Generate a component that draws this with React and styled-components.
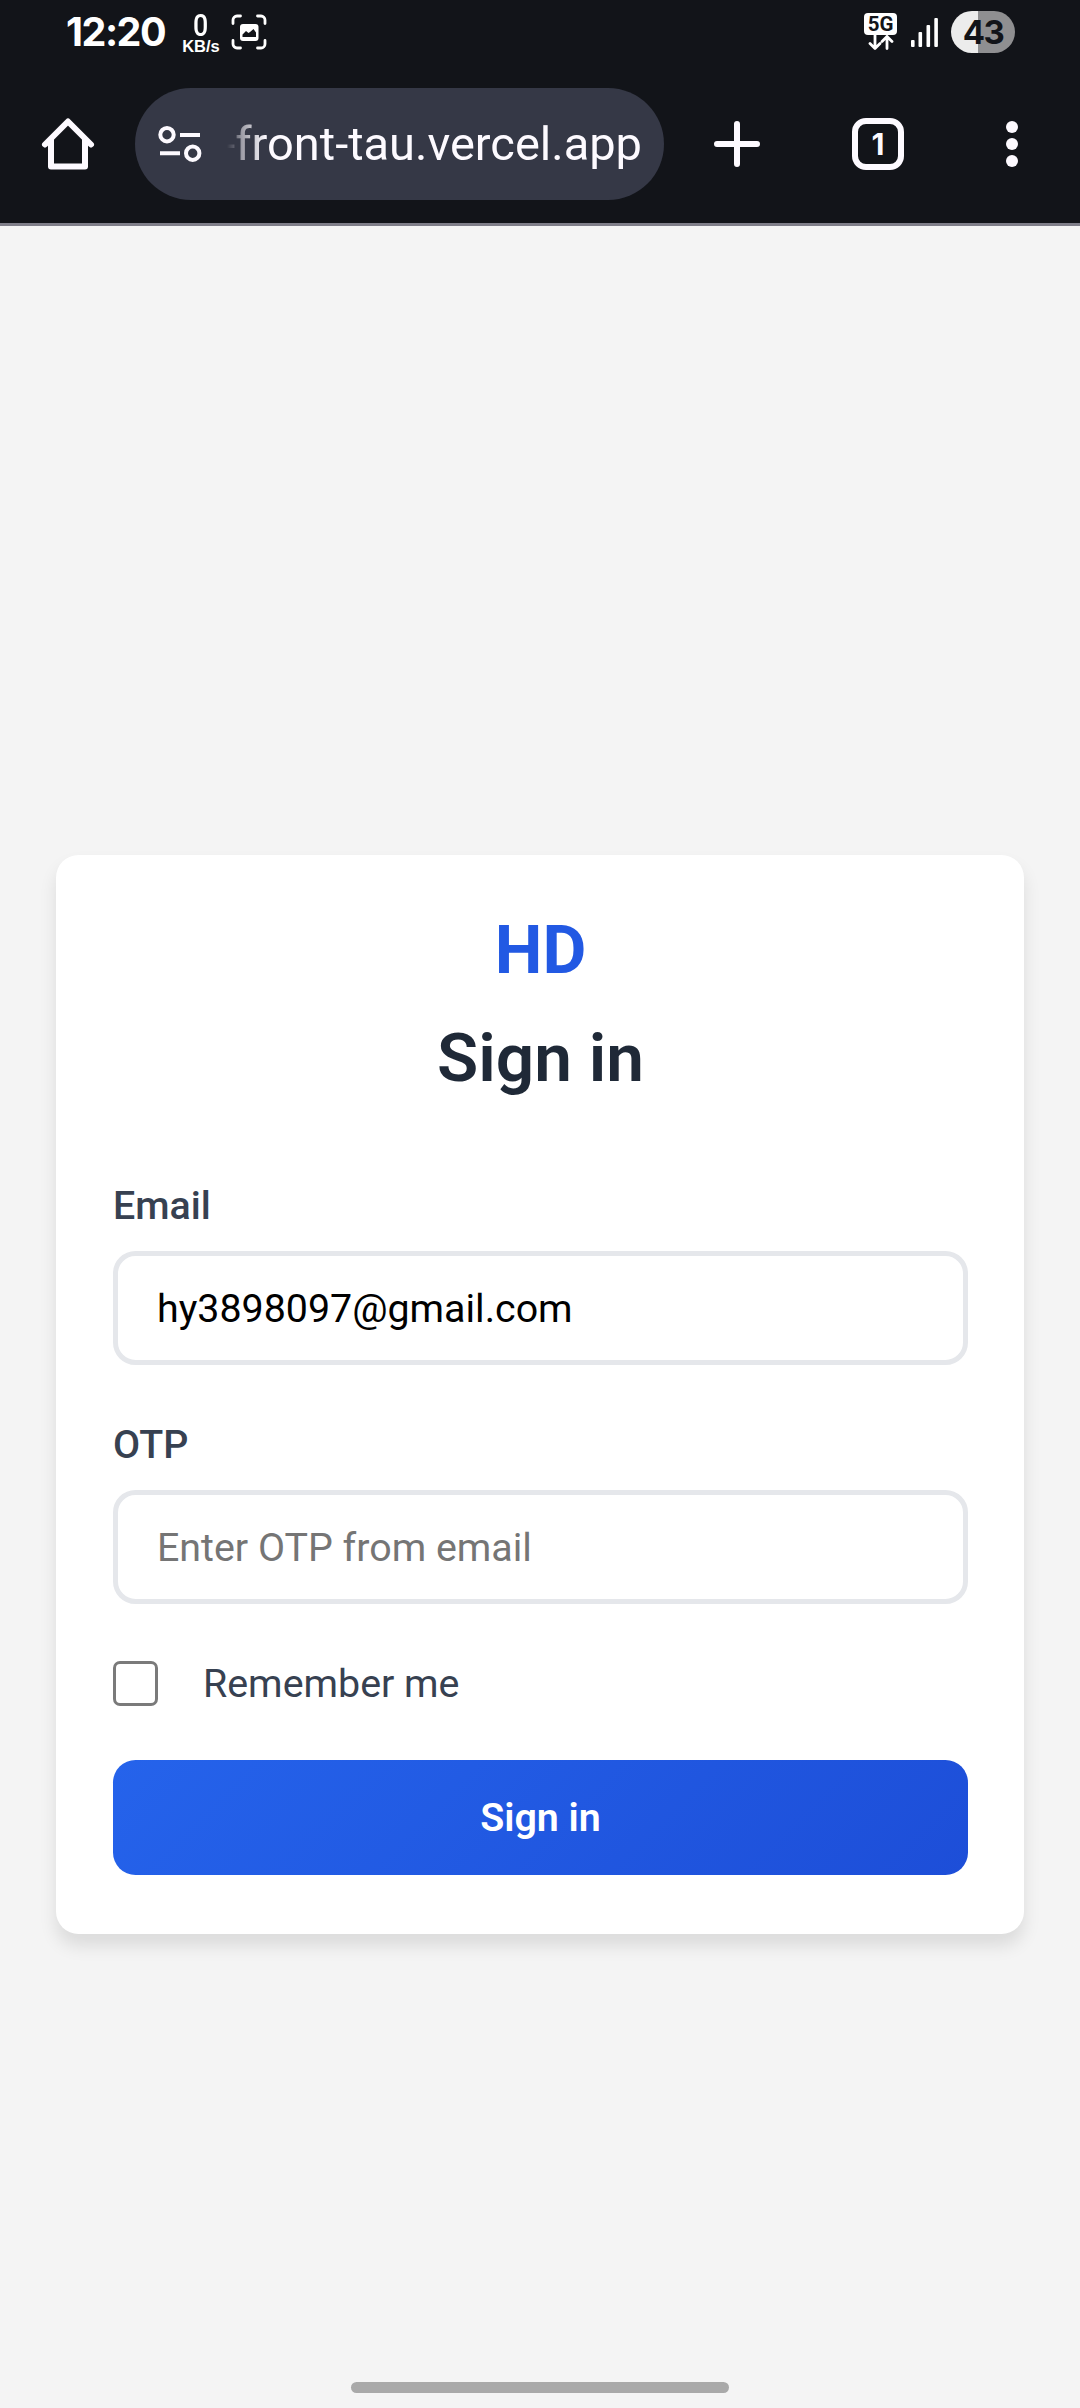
import React from "react";
import styled, { createGlobalStyle } from "styled-components";

const GlobalStyle = createGlobalStyle`
  * { box-sizing: border-box; }
  body {
    margin: 0;
    background: #f4f4f4;
    font-family: Roboto, "Liberation Sans", sans-serif;
  }
`;

const Screen = styled.div`
  display: flex;
  flex-direction: column;
  width: 1080px;
  height: 2408px;
  overflow: hidden;
  background: #f4f4f4;
`;

const Chrome = styled.header`
  height: 226px;
  flex: none;
  background: #121419;
  border-bottom: 3px solid #7f7e89;
  color: #fdfaff;
`;

const StatusBar = styled.div`
  display: flex;
  justify-content: space-between;
  height: 65px;
  padding: 0 65px 0 66px;
`;

const StatusGroup = styled.div`
  display: flex;
  align-items: flex-start;
`;

const Clock = styled.span`
  width: 116px;
  padding-top: 8px;
  font: 700 39.5px/48px Inter, Roboto, sans-serif;
  letter-spacing: -1.5px;
  color: #fff;
  white-space: nowrap;
`;

const NetSpeed = styled.div`
  display: flex;
  flex-direction: column;
  align-items: center;
  width: 38px;
  margin-right: 11px;
  padding-top: 12px;
  color: #fff;
`;

const SpeedValue = styled.span`
  font: 500 30.5px/27px Roboto, sans-serif;
  transform: scaleX(0.88);
`;

const SpeedUnit = styled.span`
  font: 700 16.5px/15px "Liberation Sans", sans-serif;
`;

const StatusIcon = styled.svg`
  display: block;
  flex: none;
  margin-top: ${(p) => p.$top || 0}px;
  margin-right: ${(p) => p.$right || 0}px;
`;

const Network = styled.div`
  display: flex;
  flex-direction: column;
  align-items: center;
  width: 33px;
  margin: 13px 14px 0 0;
`;

const NetworkLabel = styled.span`
  width: 33px;
  height: 22px;
  border-radius: 4px;
  background: #fff;
  color: #121419;
  text-align: center;
  font: 700 20.5px/23px Roboto, sans-serif;
`;

const Battery = styled.div`
  width: 64px;
  height: 42px;
  margin-top: 11px;
  border-radius: 21px;
  background: linear-gradient(90deg, #ececec 27px, #8f8f91 27px);
  color: #121419;
  text-align: center;
  font: 700 33px/42px Inter, Roboto, sans-serif;
  letter-spacing: -1.5px;
`;

const Toolbar = styled.div`
  display: flex;
  align-items: center;
  height: 158px;
  padding-left: 40px;
`;

const Icon = styled.svg`
  display: block;
  flex: none;
  fill: none;
  stroke: #fdfaff;
  stroke-width: ${(p) => p.$stroke || 6};
  stroke-linecap: ${(p) => p.$cap || "round"};
  stroke-linejoin: round;
`;

const AddressBar = styled.div`
  display: flex;
  align-items: center;
  width: 529px;
  height: 112px;
  margin: 0 48px 0 39px;
  padding-left: 22px;
  border-radius: 56px;
  background: #353846;
`;

const Url = styled.div`
  display: flex;
  justify-content: flex-end;
  width: 420px;
  margin-left: 17px;
  overflow: hidden;
  white-space: nowrap;
  font: 400 47px/70px Roboto, sans-serif;
  -webkit-mask-image: linear-gradient(90deg, transparent 5px, #0003 12px, #0008 20px, #000 44px);
  mask-image: linear-gradient(90deg, transparent 5px, #0003 12px, #0008 20px, #000 44px);
`;

const TabCount = styled.div`
  width: 52px;
  height: 52px;
  margin: 0 99px 0 90px;
  border: 6px solid #fdfaff;
  border-radius: 14px;
  text-align: center;
  font: 700 30px/40px Inter, Roboto, sans-serif;
`;

const Page = styled.main`
  flex: 1;
  padding: 629px 56px 0;
`;

const Card = styled.form`
  display: flex;
  flex-direction: column;
  height: 1079px;
  padding: 55px 56px 0 57px;
  border-radius: 22.5px;
  background: #fff;
  box-shadow: 0 11.25px 17px rgba(0, 0, 0, 0.1);
`;

const Brand = styled.div`
  text-align: center;
  font-size: 67.5px;
  line-height: 79px;
  font-weight: 700;
  color: #2259e3;
`;

const Title = styled.h1`
  margin: 29px 0 86px;
  text-align: center;
  font-size: 67.5px;
  line-height: 79px;
  font-weight: 600;
  color: #1f2937;
`;

const Field = styled.label`
  display: flex;
  flex-direction: column;
  gap: 22px;
  margin-bottom: 57px;
  font-size: 39.375px;
  line-height: 46px;
  font-weight: 500;
  color: #374151;
`;

const Input = styled.input`
  height: 114px;
  width: 100%;
  padding: 0 39px;
  border: 5px solid #e5e7eb;
  border-radius: 22.5px;
  outline: none;
  background: #fff;
  color: #000;
  font: 400 39.375px/46px Roboto, sans-serif;
  &::placeholder { color: #757575; opacity: 1; }
`;

const Remember = styled.label`
  display: flex;
  align-items: center;
  gap: 45px;
  height: 45px;
  font-size: 39.375px;
  color: #374151;
`;

const Checkbox = styled.input`
  appearance: none;
  width: 45px;
  height: 45px;
  margin: 0;
  border: 3px solid #7a7a7a;
  border-radius: 7px;
  background: #fff;
`;

const Submit = styled.button`
  height: 115px;
  margin-top: 54px;
  padding: 0;
  border: 0;
  border-radius: 22.5px;
  background: linear-gradient(135deg, #2563eb, #1d4ed8);
  color: #fff;
  font: 600 39.375px/46px Roboto, sans-serif;
`;

const HomeIndicator = styled.div`
  flex: none;
  width: 378px;
  height: 11px;
  margin: 0 auto 15px;
  border-radius: 5.5px;
  background: #a9a9a9;
`;

export default function App() {
  return (
    <Screen>
      <GlobalStyle />
      <Chrome>
        <StatusBar>
          <StatusGroup>
            <Clock>12:20</Clock>
            <NetSpeed>
              <SpeedValue>0</SpeedValue>
              <SpeedUnit>KB/s</SpeedUnit>
            </NetSpeed>
            <StatusIcon $top={14} width="36" height="36" viewBox="0 0 36 36">
              <g fill="none" stroke="#fff" strokeWidth="2.8" strokeLinecap="round">
                <path d="M2 9.500V6a4 4 0 0 1 4-4h3.500M26.500 2H30a4 4 0 0 1 4 4v3.500M34 26.500V30a4 4 0 0 1-4 4h-3.500M9.500 34H6a4 4 0 0 1-4-4v-3.500" />
              </g>
              <rect x="9" y="10" width="18.500" height="17" rx="3" fill="#fff" />
              <path d="M11.500 23v-2.500l3.500-3.500 2.500 2 1.500-1 3.500-3 2.500 3.500V23z" fill="#121419" />
            </StatusIcon>
          </StatusGroup>
          <StatusGroup>
            <Network>
              <NetworkLabel>5G</NetworkLabel>
              <svg width="30" height="16" viewBox="0 0 30 16">
                <path
                  d="M9 0v13M4 8.500l5 5 5-5M21 13.500V1.500M16 6.500l5-5 5 5"
                  fill="none"
                  stroke="#fff"
                  strokeWidth="2.8"
                  strokeLinecap="round"
                  strokeLinejoin="round"
                />
              </svg>
            </Network>
            <StatusIcon $top={17} $right={12} width="28" height="31" viewBox="-1 0 28 31">
              <g fill="#fff">
                <rect x="-1" y="23" width="3.600" height="7" rx="1" />
                <rect x="6.500" y="15" width="3.600" height="15" rx="1" />
                <rect x="14.500" y="8" width="3.600" height="22" rx="1" />
                <rect x="22.300" y="1" width="3.600" height="29" rx="1" />
              </g>
            </StatusIcon>
            <Battery>43</Battery>
          </StatusGroup>
        </StatusBar>
        <Toolbar>
          <Icon width="56" height="56" viewBox="0 0 56 56">
            <path d="M5 28.500 28 5.500 51 28.500M11 24v26.500h34V24" />
          </Icon>
          <AddressBar>
            <Icon $stroke={4} $cap="butt" width="48" height="40" viewBox="0 0 48 40">
              <circle cx="10" cy="10.700" r="6.700" />
              <path d="M23 10.900h20M3 29.200h20" />
              <circle cx="35.700" cy="29.200" r="6.700" />
            </Icon>
            <Url>
              <span>-front-tau.vercel.app</span>
            </Url>
          </AddressBar>
          <Icon width="50" height="52" viewBox="0 0 50 52">
            <path d="M25 6v40M5 26h40" />
          </Icon>
          <TabCount>1</TabCount>
          <Icon width="18" height="52" viewBox="0 0 18 52">
            <g fill="#fdfaff" stroke="none">
              <circle cx="9" cy="9" r="6" />
              <circle cx="9" cy="26" r="6" />
              <circle cx="9" cy="43" r="6" />
            </g>
          </Icon>
        </Toolbar>
      </Chrome>
      <Page>
        <Card>
          <Brand>HD</Brand>
          <Title>Sign in</Title>
          <Field>
            Email
            <Input type="text" defaultValue="hy3898097@gmail.com" />
          </Field>
          <Field>
            OTP
            <Input type="text" placeholder="Enter OTP from email" />
          </Field>
          <Remember>
            <Checkbox type="checkbox" />
            Remember me
          </Remember>
          <Submit type="button">Sign in</Submit>
        </Card>
      </Page>
      <HomeIndicator />
    </Screen>
  );
}
